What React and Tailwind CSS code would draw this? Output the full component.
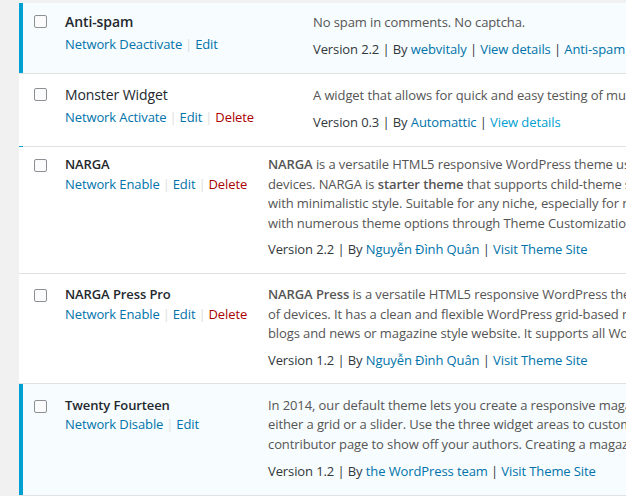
import React from "react";

const Sep = () => <span className="text-[#ddd] px-[3px]">|</span>;

const Checkbox = () => (
  <div className="pl-[15px]">
    <div className="w-[13px] h-[13px] rounded-[2px] border border-[#8c8f94] bg-[#fbfbfb]"></div>
  </div>
);

const rowBg = (active) =>
  active ? "bg-[#f7fcfe] shadow-[inset_4px_0_0_#00a0d2]" : "bg-[#fff]";

const PluginRow = ({ active, name, actions, desc, meta, pt }) => (
  <div className={"flex border-b border-[#e1e1e1] pb-[14px] " + pt + " " + rowBg(active)}>
    <div className="w-[46px] shrink-0 pt-[3px]">
      <Checkbox />
    </div>
    <div className="w-[248px] shrink-0">
      <div className={"text-[14px] leading-[20px] text-[#23282d] mb-[2px] " + (active ? "font-semibold" : "")}>
        {name}
      </div>
      <div className="leading-[20px]">{actions}</div>
    </div>
    <div className="whitespace-nowrap">
      <p className="leading-[20px] text-[#555]">{desc}</p>
      <p className="leading-[20px] mt-[7px] text-[#32373c]">{meta}</p>
    </div>
  </div>
);

const ThemeRow = ({ active, name, actions, lines, meta, pt, pb, mt }) => (
  <div className={"flex border-b border-[#e1e1e1] " + pt + " " + pb + " " + rowBg(active)}>
    <div className="w-[46px] shrink-0 pt-[4px]">
      <Checkbox />
    </div>
    <div className="w-[203px] shrink-0">
      <div className="leading-[19.5px] font-semibold text-[#23282d]">{name}</div>
      <div className="leading-[19.5px]">{actions}</div>
    </div>
    <div className="whitespace-nowrap">
      <div className="leading-[19.5px] text-[#555]">
        {lines.map((l, i) => (
          <div key={i}>{l}</div>
        ))}
      </div>
      <p className={"leading-[20px] text-[#32373c] " + mt}>{meta}</p>
    </div>
  </div>
);

const A = ({ children, light }) => (
  <span className={light ? "text-[#00a0d2]" : "text-[#0073aa]"}>{children}</span>
);
const Del = () => <span className="text-[#a00]">Delete</span>;

export default function App() {
  return (
    <div
      className="w-[626px] h-[496px] overflow-hidden bg-[#f1f1f1] pl-[19px] pt-[3px] text-[13px] tracking-[-0.1px]"
      style={{ fontFamily: '"Open Sans", sans-serif' }}
    >
      <div className="w-[900px]">
        <PluginRow
          active
          pt="pt-[9px]"
          name="Anti-spam"
          actions={
            <>
              <A>Network Deactivate</A>
              <Sep />
              <A>Edit</A>
            </>
          }
          desc="No spam in comments. No captcha."
          meta={
            <>
              Version 2.2 | By <A>webvitaly</A> | <A>View details</A> | <A>Anti-spam Pro</A>
            </>
          }
        />
        <PluginRow
          pt="pt-[11px]"
          name="Monster Widget"
          actions={
            <>
              <A>Network Activate</A>
              <Sep />
              <A>Edit</A>
              <Sep />
              <Del />
            </>
          }
          desc="A widget that allows for quick and easy testing of multiple widgets. Not intended for production use."
          meta={
            <>
              Version 0.3 | By <A>Automattic</A> | <A light>View details</A>
            </>
          }
        />
        <div className="flex h-px -mt-px">
          <div className="w-1 bg-[#00a0d2]"></div>
          <div className="flex-1 bg-[#e1e1e1]"></div>
        </div>
        <ThemeRow
          pt="pt-[8px]"
          pb="pb-[14px]"
          mt="mt-[6px]"
          name="NARGA"
          actions={
            <>
              <A>Network Enable</A>
              <Sep />
              <A>Edit</A>
              <Sep />
              <Del />
            </>
          }
          lines={[
            <>
              <b className="font-semibold">NARGA</b> is a versatile HTML5 responsive WordPress theme using Foundation for all kind of
            </>,
            <>
              devices. NARGA is <b className="font-semibold">starter theme</b> that supports child-theme so you can build your own
            </>,
            <>with minimalistic style. Suitable for any niche, especially for news, blogs or personal websites</>,
            <>with numerous theme options through Theme Customization.</>,
          ]}
          meta={
            <>
              Version 2.2 | By <A>Nguyễn Đình Quân</A> | <A>Visit Theme Site</A>
            </>
          }
        />
        <ThemeRow
          pt="pt-[11px]"
          pb="pb-[13px]"
          mt="mt-[6px]"
          name="NARGA Press Pro"
          actions={
            <>
              <A>Network Enable</A>
              <Sep />
              <A>Edit</A>
              <Sep />
              <Del />
            </>
          }
          lines={[
            <>
              <b className="font-semibold">NARGA Press</b> is a versatile HTML5 responsive WordPress theme for all kind
            </>,
            <>of devices. It has a clean and flexible WordPress grid-based magazine layout suitable for</>,
            <>blogs and news or magazine style website. It supports all WordPress features.</>,
          ]}
          meta={
            <>
              Version 1.2 | By <A>Nguyễn Đình Quân</A> | <A>Visit Theme Site</A>
            </>
          }
        />
        <ThemeRow
          active
          pt="pt-[12px]"
          pb="pb-[14px]"
          mt="mt-[7px]"
          name="Twenty Fourteen"
          actions={
            <>
              <A>Network Disable</A>
              <Sep />
              <A>Edit</A>
            </>
          }
          lines={[
            <>In 2014, our default theme lets you create a responsive magazine website with a sleek, modern</>,
            <>either a grid or a slider. Use the three widget areas to customize your website, and change</>,
            <>contributor page to show off your authors. Creating a magazine website with WordPress</>,
          ]}
          meta={
            <>
              Version 1.2 | By <A>the WordPress team</A> | <A>Visit Theme Site</A>
            </>
          }
        />
      </div>
    </div>
  );
}
